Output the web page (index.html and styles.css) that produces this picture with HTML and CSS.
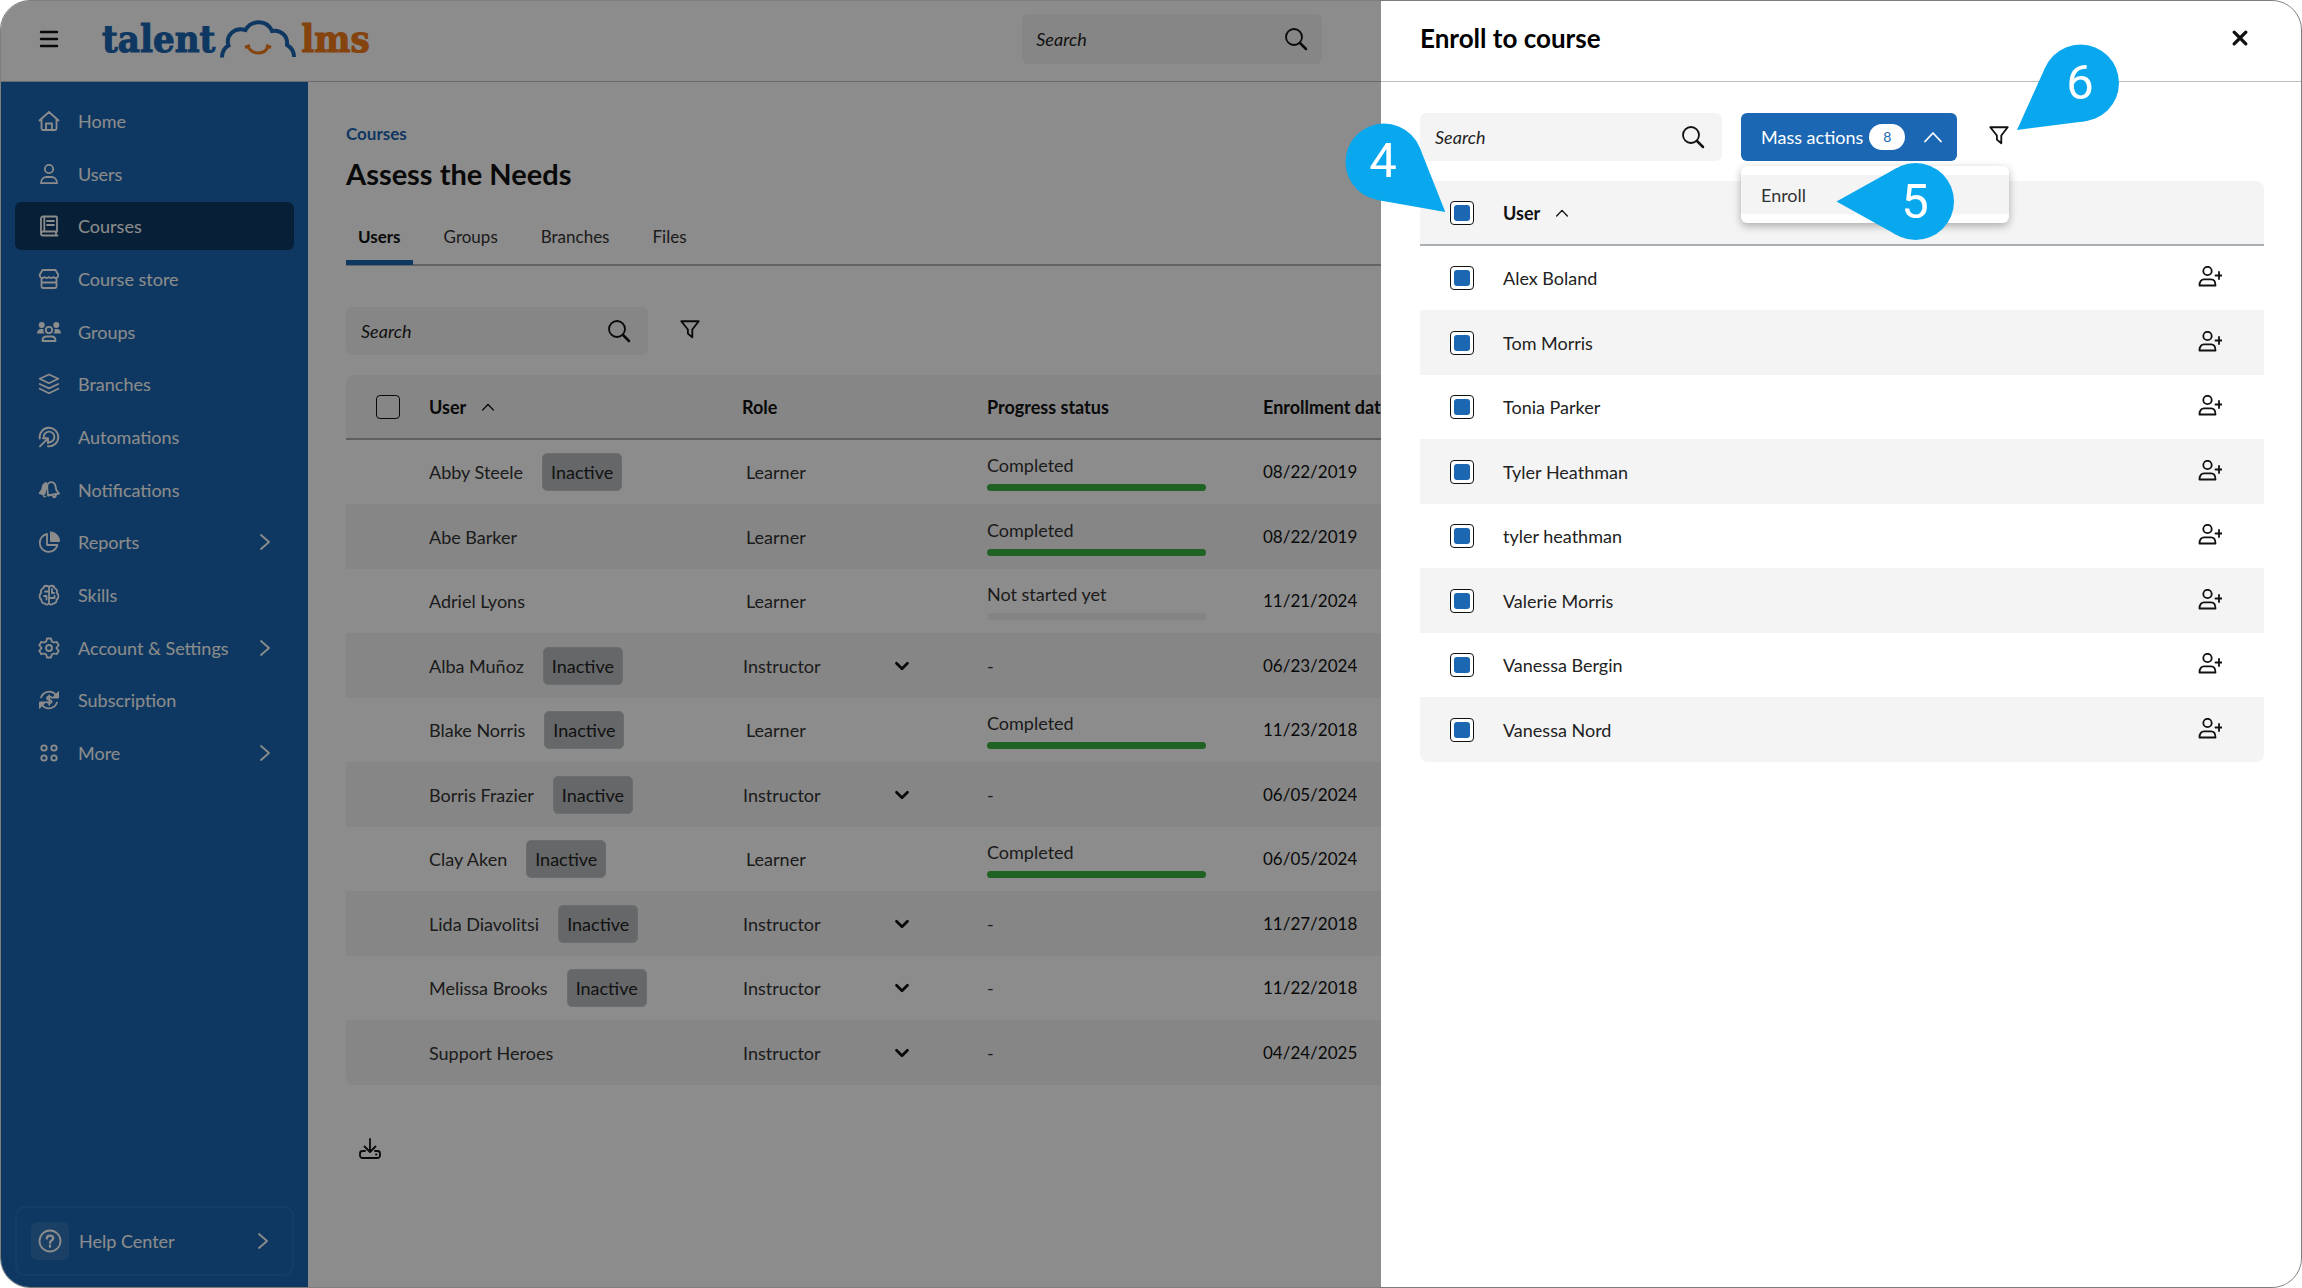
FILE: index.html
```html
<!DOCTYPE html>
<html lang="en">
<head>
    <meta charset="UTF-8">
    <meta name="viewport" content="width=device-width, initial-scale=1.0">
    <title>TalentLMS - Enroll to course</title>
    <link rel="stylesheet" href="styles.css">
</head>
<body>
    <!-- icon set -->
    <svg class="sprite" aria-hidden="true">
        <symbol id="i-menu" viewBox="0 0 24 24"><path d="M4 5h16M4 12h16M4 19h16" stroke-width="2.400"/></symbol>
        <symbol id="i-home" viewBox="0 0 24 24"><path d="M2.5 11.5 12 3l9.500 8.500M4.500 10v9.500a1.500 1.500 0 0 0 1.500 1.500h12a1.500 1.500 0 0 0 1.500-1.500V10M9 21v-6.500h6V21"/></symbol>
        <symbol id="i-user" viewBox="0 0 24 24"><circle cx="12" cy="7" r="4.200"/><path d="M4 21.200c0-4 2.600-6.200 5.500-6.200h5c2.900 0 5.500 2.200 5.500 6.200z"/></symbol>
        <symbol id="i-book" viewBox="0 0 24 24"><path d="M20 17.500V3.500a1 1 0 0 0-1-1H6a2 2 0 0 0-2 2v14.700M20 17.500H6a2 2 0 0 0 0 4h14.500M19 17.500v4M7.300 2.500v15M10 7h7M10 11h7"/></symbol>
        <symbol id="i-store" viewBox="0 0 24 24"><path d="M5.500 3h13l2.700 4.500c.5 2.500-1.200 3.500-2.700 3.500-1.300 0-2.200-1-2.200-1s-.9 1-2.200 1-2.100-1-2.100-1-.9 1-2.200 1-2.200-1-2.200-1-.8 1-2.100 1c-1.500 0-3.200-1-2.700-3.500zM4.500 12v7.500a1.500 1.500 0 0 0 1.500 1.500h12a1.500 1.500 0 0 0 1.500-1.500V12M4.500 15.500h15"/></symbol>
        <symbol id="i-groups" viewBox="0 0 24 24"><g fill="currentColor" stroke="none"><circle cx="4.700" cy="5" r="3"/><circle cx="19.300" cy="5" r="3"/><path d="M0 13.500C0 10.500 2 9 4 9h2.500C6 11 6.700 12.500 7.500 13.500zM24 13.500c0-3-2-4.500-4-4.500h-2.500c.5 2-.2 3.500-1 4.500z"/></g><circle cx="12" cy="10" r="3.200"/><path d="M5.500 21c0-3 2-4.500 4-4.500h5c2 0 4 1.500 4 4.500z"/></symbol>
        <symbol id="i-layers" viewBox="0 0 24 24"><path d="m12 2.500 9.300 4.300L12 11.200 2.700 6.800zM2.700 12l9.300 4.400 9.300-4.400M2.700 16.800l9.300 4.400 9.300-4.400"/></symbol>
        <symbol id="i-target" viewBox="0 0 24 24"><path d="M2.800 13.500A9.300 9.300 0 1 1 11 21.300M6.800 12.300A5.300 5.300 0 1 1 12.500 17.200M3 21.300l8-8M6 13.300h5v5" stroke-width="1.900"/></symbol>
        <symbol id="i-bell" viewBox="0 0 24 24"><path d="M9 4.500C6 5 5 8 5 11l-3 4.500L7.500 17 9.500 10zM6 17.500c.5 1.800 2 1.800 3 1" fill="currentColor" stroke-width="1"/><path d="m11 17.500-.8-8C10 6 11.800 4.200 14 4.200c2.500 0 4 1.600 4.500 3.800l.8 4 2.700 3.500zM16 18.500c1.500 1.500 2.800.5 2.800-1.300"/></symbol>
        <symbol id="i-pie" viewBox="0 0 24 24"><path d="M10 4a9 9 0 1 0 10.500 11H10z"/><path d="M13.500 2v9.500h9c0-5.500-4-9.500-9-9.500z" fill="currentColor" stroke-width="1"/></symbol>
        <symbol id="i-brain" viewBox="0 0 24 24"><path d="M12 4.500C11 2 7 2.200 6.500 5 4.500 6 3.500 8 4.300 9.800 2 11.500 2 15 4.300 16.500c0 2.800 2 4 3.500 4 1.200 1.600 3.700 1.300 4.200-.5zM12 4.500c1-2.500 5-2.300 5.500.5 2 1 3 3 2.200 4.800 2.300 1.700 2.300 5.200 0 6.700 0 2.800-2 4-3.500 4-1.200 1.600-3.700 1.300-4.200-.5zM8 8.500h4M7 13h2.500v3.500M12 15h5.500v-2M15 6v4h2"/></symbol>
        <symbol id="i-gear" viewBox="0 0 24 24"><circle cx="12" cy="12" r="3"/><path d="M10 2.500h4l.8 2.900 2 1.100 2.900-.7 2 3.500L19.600 11.500v1l2.100 2.200-2 3.500-2.900-.7-2 1.100-.8 2.900h-4l-.8-2.900-2-1.100-2.900.7-2-3.500 2.100-2.200v-1L2.300 9.300l2-3.500 2.900.7 2-1.100z"/></symbol>
        <symbol id="i-renew" viewBox="0 0 24 24"><path d="M4 9.500A8.700 8.700 0 0 1 19 7M20 14.500A8.700 8.700 0 0 1 5 17"/><path d="M21.500 4v6h-6zM2.500 20v-6h6z" fill="currentColor" stroke-width="1"/><path d="M14.500 9.500c-.5-1-4.500-1.300-4.500.7s4.700 1.200 4.700 3.300-4.200 2-5 .4M12.200 7.300v9.500"/></symbol>
        <symbol id="i-more" viewBox="0 0 24 24"><circle cx="7" cy="7" r="2.700"/><circle cx="17" cy="7" r="2.700"/><circle cx="7" cy="17" r="2.700"/><circle cx="17" cy="17" r="2.700"/></symbol>
        <symbol id="i-help" viewBox="0 0 24 24"><circle cx="12" cy="12" r="10.500"/><path d="M8.800 9.500c0-4 6.400-3.800 6.400-.3 0 2.300-3.200 2.300-3.200 4.600M12 16.500v1.300" stroke-width="2.300"/></symbol>
        <symbol id="i-right" viewBox="0 0 24 24"><path d="m8 5 8 7-8 7"/></symbol>
        <symbol id="i-up" viewBox="0 0 24 24"><path d="m4 16.500 8-8.500 8 8.500"/></symbol>
        <symbol id="i-down" viewBox="0 0 24 24"><path d="m6 9 6 6 6-6"/></symbol>
        <symbol id="i-search" viewBox="0 0 24 24"><circle cx="10" cy="10" r="8"/><path d="m16 16 6 6" stroke-width="2.500"/></symbol>
        <symbol id="i-filter" viewBox="0 0 24 24"><path d="M2.500 3.500h19l-7 9V21L9.700 17v-4.500z"/></symbol>
        <symbol id="i-close" viewBox="0 0 24 24"><path d="m5 5 14 14M19 5 5 19" stroke-width="4"/></symbol>
        <symbol id="i-download" viewBox="0 0 24 24"><path d="M12 2v12M6.500 9.500 12 15l5.500-5.500M7 14H4.500A2.500 2.500 0 0 0 2 16.500v2A2.500 2.500 0 0 0 4.500 21h15a2.500 2.500 0 0 0 2.500-2.500v-2a2.500 2.500 0 0 0-2.500-2.500H17M18 17.500h.5"/></symbol>
        <symbol id="i-enroll" viewBox="0 0 24 24"><circle cx="9.500" cy="5" r="4.200"/><path d="M1.500 19.500c0-4.200 2-6.200 4.500-6.200h7c2.500 0 4.500 2 4.500 6.200zM21 6v7M17.500 9.500h6.500"/></symbol>
    </svg>

    <div class="window">
        <header class="topbar">
            <div class="brand">
                <button class="icon-btn" aria-label="Menu"><svg class="icon"><use href="#i-menu"/></svg></button>
                <a class="logo" href="#" aria-label="talentlms">
                    <span class="logo-talent">talent</span>
                    <svg class="logo-cloud" viewBox="0 0 78 40">
                        <path d="M3 38.500C3 33 5 29 9.500 26.500 6.500 17 15 7.500 26.500 11 32 .5 48 .5 53 12 62 10.500 69 17 68 26c4.500 2.500 7 6.500 7 12" fill="none" stroke="#1b67b1" stroke-width="4"/>
                        <path d="M29 28c5 8 16 8 20 0M26 28.500l5-2M47 26.500l5 2" fill="none" stroke="#f27a1a" stroke-width="3"/>
                    </svg>
                    <span class="logo-lms">lms</span>
                </a>
            </div>
            <form class="search search-top">
                <input type="text" placeholder="Search" aria-label="Search">
                <button type="button" class="icon-btn" aria-label="Search"><svg class="icon"><use href="#i-search"/></svg></button>
            </form>
        </header>

        <div class="layout">
            <aside class="sidebar">
                <nav class="nav">
                    <a href="#"><svg class="icon"><use href="#i-home"/></svg>Home</a>
                    <a href="#"><svg class="icon"><use href="#i-user"/></svg>Users</a>
                    <a href="#" class="active"><svg class="icon"><use href="#i-book"/></svg>Courses</a>
                    <a href="#"><svg class="icon"><use href="#i-store"/></svg>Course store</a>
                    <a href="#"><svg class="icon"><use href="#i-groups"/></svg>Groups</a>
                    <a href="#"><svg class="icon"><use href="#i-layers"/></svg>Branches</a>
                    <a href="#"><svg class="icon"><use href="#i-target"/></svg>Automations</a>
                    <a href="#"><svg class="icon"><use href="#i-bell"/></svg>Notifications</a>
                    <a href="#"><svg class="icon"><use href="#i-pie"/></svg>Reports<svg class="icon arrow"><use href="#i-right"/></svg></a>
                    <a href="#"><svg class="icon"><use href="#i-brain"/></svg>Skills</a>
                    <a href="#"><svg class="icon"><use href="#i-gear"/></svg>Account &amp; Settings<svg class="icon arrow"><use href="#i-right"/></svg></a>
                    <a href="#"><svg class="icon"><use href="#i-renew"/></svg>Subscription</a>
                    <a href="#"><svg class="icon"><use href="#i-more"/></svg>More<svg class="icon arrow"><use href="#i-right"/></svg></a>
                </nav>
                <a href="#" class="help">
                    <span class="help-icon"><svg class="icon"><use href="#i-help"/></svg></span>
                    Help Center
                    <svg class="icon arrow"><use href="#i-right"/></svg>
                </a>
            </aside>

            <main class="content">
                <a href="#" class="breadcrumb">Courses</a>
                <h1>Assess the Needs</h1>
                <div class="tabs">
                    <a href="#" class="active">Users</a>
                    <a href="#">Groups</a>
                    <a href="#">Branches</a>
                    <a href="#">Files</a>
                </div>
                <div class="toolbar">
                    <form class="search">
                        <input type="text" placeholder="Search" aria-label="Search users">
                        <button type="button" class="icon-btn" aria-label="Search users"><svg class="icon"><use href="#i-search"/></svg></button>
                    </form>
                    <button class="icon-btn filter" aria-label="Filter"><svg class="icon"><use href="#i-filter"/></svg></button>
                </div>

                <table class="grid">
                    <colgroup><col class="col-check"><col class="col-user"><col class="col-role"><col class="col-progress"><col></colgroup>
                    <thead>
                        <tr>
                            <th class="check"><input type="checkbox" aria-label="Select all users"></th>
                            <th>User<svg class="icon sort"><use href="#i-up"/></svg></th>
                            <th>Role</th>
                            <th>Progress status</th>
                            <th>Enrollment date</th>
                        </tr>
                    </thead>
                    <tbody>
                        <tr><td></td><td>Abby Steele<span class="badge">Inactive</span></td><td><span class="role">Learner</span></td><td>Completed<div class="bar done"></div></td><td class="date">08/22/2019</td></tr>
                        <tr><td></td><td>Abe Barker</td><td><span class="role">Learner</span></td><td>Completed<div class="bar done"></div></td><td class="date">08/22/2019</td></tr>
                        <tr><td></td><td>Adriel Lyons</td><td><span class="role">Learner</span></td><td>Not started yet<div class="bar"></div></td><td class="date">11/21/2024</td></tr>
                        <tr><td></td><td>Alba Muñoz<span class="badge">Inactive</span></td><td><div class="role-select"><select aria-label="Role of Alba Muñoz"><option>Instructor</option></select><svg class="icon"><use href="#i-down"/></svg></div></td><td>-</td><td class="date">06/23/2024</td></tr>
                        <tr><td></td><td>Blake Norris<span class="badge">Inactive</span></td><td><span class="role">Learner</span></td><td>Completed<div class="bar done"></div></td><td class="date">11/23/2018</td></tr>
                        <tr><td></td><td>Borris Frazier<span class="badge">Inactive</span></td><td><div class="role-select"><select aria-label="Role of Borris Frazier"><option>Instructor</option></select><svg class="icon"><use href="#i-down"/></svg></div></td><td>-</td><td class="date">06/05/2024</td></tr>
                        <tr><td></td><td>Clay Aken<span class="badge">Inactive</span></td><td><span class="role">Learner</span></td><td>Completed<div class="bar done"></div></td><td class="date">06/05/2024</td></tr>
                        <tr><td></td><td>Lida Diavolitsi<span class="badge">Inactive</span></td><td><div class="role-select"><select aria-label="Role of Lida Diavolitsi"><option>Instructor</option></select><svg class="icon"><use href="#i-down"/></svg></div></td><td>-</td><td class="date">11/27/2018</td></tr>
                        <tr><td></td><td>Melissa Brooks<span class="badge">Inactive</span></td><td><div class="role-select"><select aria-label="Role of Melissa Brooks"><option>Instructor</option></select><svg class="icon"><use href="#i-down"/></svg></div></td><td>-</td><td class="date">11/22/2018</td></tr>
                        <tr><td></td><td>Support Heroes</td><td><div class="role-select"><select aria-label="Role of Support Heroes"><option>Instructor</option></select><svg class="icon"><use href="#i-down"/></svg></div></td><td>-</td><td class="date">04/24/2025</td></tr>
                    </tbody>
                </table>
                <button class="icon-btn download" aria-label="Download"><svg class="icon"><use href="#i-download"/></svg></button>
            </main>
        </div>

        <div class="scrim"></div>

        <section class="drawer" role="dialog" aria-label="Enroll to course">
            <header class="drawer-head">
                <h2>Enroll to course</h2>
                <button class="icon-btn" aria-label="Close"><svg class="icon close"><use href="#i-close"/></svg></button>
            </header>
            <div class="drawer-body">
                <div class="toolbar">
                    <form class="search">
                        <input type="text" placeholder="Search" aria-label="Search people">
                        <button type="button" class="icon-btn" aria-label="Search people"><svg class="icon"><use href="#i-search"/></svg></button>
                    </form>
                    <div class="mass">
                        <button class="mass-btn">Mass actions<span class="count">8</span><svg class="icon"><use href="#i-up"/></svg></button>
                        <div class="mass-menu">
                            <button>Enroll</button>
                        </div>
                    </div>
                    <button class="icon-btn filter" aria-label="Filter people"><svg class="icon"><use href="#i-filter"/></svg></button>
                </div>

                <table class="grid people">
                    <colgroup><col class="col-check"><col><col class="col-action"></colgroup>
                    <thead>
                        <tr>
                            <th class="check"><input type="checkbox" checked aria-label="Select all people"></th>
                            <th>User<svg class="icon sort"><use href="#i-up"/></svg></th>
                            <th></th>
                        </tr>
                    </thead>
                    <tbody>
                        <tr><td class="check"><input type="checkbox" id="p1" checked></td><td><label for="p1">Alex Boland</label></td><td><button class="icon-btn" aria-label="Enroll Alex Boland"><svg class="icon"><use href="#i-enroll"/></svg></button></td></tr>
                        <tr><td class="check"><input type="checkbox" id="p2" checked></td><td><label for="p2">Tom Morris</label></td><td><button class="icon-btn" aria-label="Enroll Tom Morris"><svg class="icon"><use href="#i-enroll"/></svg></button></td></tr>
                        <tr><td class="check"><input type="checkbox" id="p3" checked></td><td><label for="p3">Tonia Parker</label></td><td><button class="icon-btn" aria-label="Enroll Tonia Parker"><svg class="icon"><use href="#i-enroll"/></svg></button></td></tr>
                        <tr><td class="check"><input type="checkbox" id="p4" checked></td><td><label for="p4">Tyler Heathman</label></td><td><button class="icon-btn" aria-label="Enroll Tyler Heathman"><svg class="icon"><use href="#i-enroll"/></svg></button></td></tr>
                        <tr><td class="check"><input type="checkbox" id="p5" checked></td><td><label for="p5">tyler heathman</label></td><td><button class="icon-btn" aria-label="Enroll tyler heathman"><svg class="icon"><use href="#i-enroll"/></svg></button></td></tr>
                        <tr><td class="check"><input type="checkbox" id="p6" checked></td><td><label for="p6">Valerie Morris</label></td><td><button class="icon-btn" aria-label="Enroll Valerie Morris"><svg class="icon"><use href="#i-enroll"/></svg></button></td></tr>
                        <tr><td class="check"><input type="checkbox" id="p7" checked></td><td><label for="p7">Vanessa Bergin</label></td><td><button class="icon-btn" aria-label="Enroll Vanessa Bergin"><svg class="icon"><use href="#i-enroll"/></svg></button></td></tr>
                        <tr><td class="check"><input type="checkbox" id="p8" checked></td><td><label for="p8">Vanessa Nord</label></td><td><button class="icon-btn" aria-label="Enroll Vanessa Nord"><svg class="icon"><use href="#i-enroll"/></svg></button></td></tr>
                    </tbody>
                </table>
            </div>

            <!-- step pins -->
            <svg class="pin pin-4" viewBox="0 0 102 90">
                <circle cx="39" cy="39" r="38.500"/><path d="M32.300 76.900 100.300 89 74.800 24.800z"/>
                <text x="38" y="54">4</text>
            </svg>
            <svg class="pin pin-5" viewBox="0 0 120 80">
                <circle cx="79.500" cy="39.500" r="38.500"/><path d="M60.700 5.900.5 39.500l60.200 33.600z"/>
                <text x="79" y="56">5</text>
            </svg>
            <svg class="pin pin-6" viewBox="0 0 104 88">
                <circle cx="64.500" cy="39" r="38.500"/><path d="M29.400 23.100 1 86l68.400-8.800z"/>
                <text x="64" y="55">6</text>
            </svg>
        </section>
    </div>
</body>
</html>
```

FILE: styles.css
```css
* {
    box-sizing: border-box;
}
body {
    margin: 0;
    font-family: Lato, "Open Sans", sans-serif;
    font-size: 18px;
    line-height: 24px;
    color: #333;
    background: #fff;
}
a {
    color: inherit;
    text-decoration: none;
}
button, input, select {
    font: inherit;
    color: inherit;
}
.sprite {
    display: none;
}
.icon {
    width: 24px;
    height: 24px;
    flex: none;
    display: block;
    fill: none;
    stroke: currentColor;
    stroke-width: 1.8;
    stroke-linecap: round;
    stroke-linejoin: round;
}
.icon-btn {
    display: flex;
    padding: 0;
    border: none;
    background: none;
    color: #111;
    cursor: pointer;
}

/* window frame */
.window {
    position: relative;
    display: flex;
    flex-direction: column;
    min-height: 100vh;
    border: 1px solid #7d7d7d;
    border-radius: 30px;
    overflow: hidden;
}
.scrim {
    position: absolute;
    inset: 0;
    background: rgba(0, 0, 0, 0.45);
}

/* top bar */
.topbar {
    display: grid;
    grid-template-columns: auto 2fr 300px 3fr;
    align-items: center;
    height: 81px;
    padding-bottom: 4px;
    border-bottom: 1px solid #bdc1c3;
}
.brand {
    display: flex;
    align-items: center;
    gap: 41px;
    padding-left: 36px;
}
.logo {
    display: flex;
    align-items: center;
    gap: 4px;
    height: 48px;
    font-family: "DejaVu Serif Condensed", "DejaVu Serif", serif;
    font-size: 38px;
    font-weight: bold;
    line-height: 48px;
    -webkit-text-stroke: 1px currentColor;
}
.logo-talent {
    color: #1b67b1;
}
.logo-lms {
    color: #f27a1a;
}
.logo-cloud {
    width: 78px;
    height: 40px;
}
.search {
    display: flex;
    align-items: center;
    width: 302px;
    height: 48px;
    padding: 0 17px 0 15px;
    border-radius: 6px;
    background: #f4f4f4;
}
.search input {
    flex: 1;
    min-width: 0;
    padding: 0;
    border: none;
    outline: none;
    background: none;
}
.search input::placeholder {
    color: #222;
    font-style: italic;
    opacity: 1;
}
.search-top {
    grid-column: 3;
    width: auto;
    height: 50px;
    padding: 0 14px;
}

/* sidebar */
.layout {
    display: flex;
    flex: 1;
}
.sidebar {
    display: flex;
    flex-direction: column;
    justify-content: space-between;
    width: 307px;
    padding: 15px 14px 11px;
    background: #1b67b1;
    color: #fff;
}
.nav {
    display: flex;
    flex-direction: column;
    justify-content: space-between;
    height: 680px;
}
.nav a {
    display: flex;
    align-items: center;
    gap: 17px;
    height: 48px;
    padding: 0 17px 0 22px;
    border-radius: 6px;
}
.nav a.active {
    background: #0e3a64;
}
.nav .arrow, .help .arrow {
    margin-left: auto;
}
.help {
    display: flex;
    align-items: center;
    gap: 10px;
    height: 70px;
    padding: 0 17px 0 14px;
    border: 2px solid #2870b5;
    border-radius: 10px;
}
.help-icon {
    display: flex;
    padding: 7px;
    border-radius: 6px;
    background: #3275b8;
}

/* course page */
.content {
    flex: 1;
    min-width: 0;
    padding: 40px 38px;
}
.breadcrumb {
    display: block;
    font-size: 17px;
    font-weight: bold;
    color: #1b67b1;
}
h1 {
    margin: 12px 0 32px;
    font-size: 29px;
    line-height: 32px;
    color: #111;
}
.tabs {
    display: flex;
    gap: 19px;
    border-bottom: 2px solid #b0b7b9;
}
.tabs a {
    height: 43px;
    margin-bottom: -1px;
    padding: 3px 12px;
    font-size: 17px;
}
.tabs a.active {
    border-bottom: 5px solid #1b67b1;
    font-weight: bold;
    color: #111;
}
.toolbar {
    display: flex;
    align-items: center;
    gap: 19px;
}
.content .toolbar {
    margin: 41px 0 20px;
}
.filter {
    padding: 0 12px 4px;
}
.filter .icon {
    width: 22px;
    height: 22px;
    stroke-width: 2;
}

/* tables */
.grid {
    width: 100%;
    table-layout: fixed;
    border-collapse: separate;
    border-spacing: 0;
}
.col-check {
    width: 83px;
}
.col-user {
    width: 313px;
}
.col-role {
    width: 245px;
}
.col-progress {
    width: 276px;
}
.col-action {
    width: 66px;
}
.grid th, .grid td {
    padding: 0;
    text-align: left;
    white-space: nowrap;
}
.grid th {
    height: 65px;
    border-bottom: 2px solid #a9afb2;
    background: #f4f4f4;
    color: #111;
}
.grid th:first-child {
    border-top-left-radius: 8px;
}
.grid th:last-child {
    border-top-right-radius: 8px;
}
.grid td {
    height: 64px;
}
.grid tr:nth-child(even) td {
    height: 65px;
    background: #f4f4f4;
}
.grid tr:last-child td:first-child {
    border-bottom-left-radius: 8px;
}
.grid tr:last-child td:last-child {
    border-bottom-right-radius: 8px;
}
.grid .check {
    padding-left: 30px;
}
.grid input {
    display: grid;
    place-content: center;
    width: 24px;
    height: 24px;
    margin: 0;
    appearance: none;
    border: 1px solid #111;
    border-radius: 4px;
    background: #fff;
}
.grid input:checked::before {
    content: "";
    width: 16px;
    height: 16px;
    border-radius: 3px;
    background: #1b67b1;
}
.content .grid input {
    background: none;
}
.sort {
    display: inline-block;
    width: 16px;
    height: 16px;
    margin-left: 14px;
    stroke-width: 2;
    vertical-align: -1px;
}
.badge {
    display: inline-block;
    margin-left: 19px;
    padding: 6px 8px;
    border: 1px solid #c3c8cb;
    border-radius: 5px;
    background: #b9bcbf;
    color: #222;
}
.bar {
    max-width: 219px;
    height: 7px;
    margin-top: 7px;
    border-radius: 4px;
    background: #f0f0f0;
}
.bar.done {
    background: #3bb143;
}
.date {
    font-size: 17px;
    color: #111;
}
.role {
    padding-left: 4px;
}
.role-select {
    display: flex;
    align-items: center;
    width: 171px;
}
.role-select select {
    flex: 1;
    padding: 0 1px;
    border: none;
    background: none;
    appearance: none;
}
.role-select .icon {
    width: 22px;
    height: 22px;
    stroke: #111;
    stroke-width: 3;
}
.download {
    margin: 52px 12px 0;
}

/* drawer */
.drawer {
    position: absolute;
    top: 0;
    right: 0;
    bottom: 0;
    width: 40%;
    background: #fff;
    color: #222;
}
.drawer-head {
    display: flex;
    align-items: center;
    justify-content: space-between;
    height: 81px;
    padding: 0 51px 6px 39px;
    border-bottom: 1px solid #b9c0c2;
}
.drawer-head h2 {
    margin: 0;
    font-size: 26px;
    line-height: 32px;
    color: #000;
}
.close {
    width: 20px;
    height: 20px;
}
.drawer-body {
    padding: 31px 37px 0 39px;
}
.drawer .toolbar {
    margin-bottom: 20px;
}
.mass {
    position: relative;
}
.mass-btn {
    display: flex;
    align-items: center;
    height: 48px;
    padding: 0 12px 0 20px;
    border: none;
    border-radius: 6px;
    background: #1b67b3;
    color: #fff;
}
.count {
    width: 36px;
    margin: 0 16px 0 6px;
    border-radius: 13px;
    background: #fff;
    color: #1b67b3;
    font-size: 14px;
    line-height: 26px;
}
.mass-menu {
    position: absolute;
    top: 53px;
    left: 0;
    width: 268px;
    padding: 9px 0;
    border-radius: 6px;
    background: #fff;
    box-shadow: 0 3px 8px rgba(0, 0, 0, 0.3);
}
.mass-menu button {
    display: block;
    width: 100%;
    height: 39px;
    padding: 0 20px;
    border: none;
    background: #f4f4f4;
    color: #333;
    text-align: left;
}

/* numbered pins, placed over the drawer */
.pin {
    position: absolute;
    fill: #09a7ee;
}
.pin text {
    fill: #fff;
    font-family: Roboto, sans-serif;
    font-size: 49px;
    text-anchor: middle;
}
.pin-4 {
    top: 122px;
    left: -36px;
    width: 102px;
    height: 90px;
}
.pin-5 {
    top: 161px;
    left: 455px;
    width: 120px;
    height: 80px;
}
.pin-6 {
    top: 43px;
    left: 635px;
    width: 104px;
    height: 88px;
}
```
